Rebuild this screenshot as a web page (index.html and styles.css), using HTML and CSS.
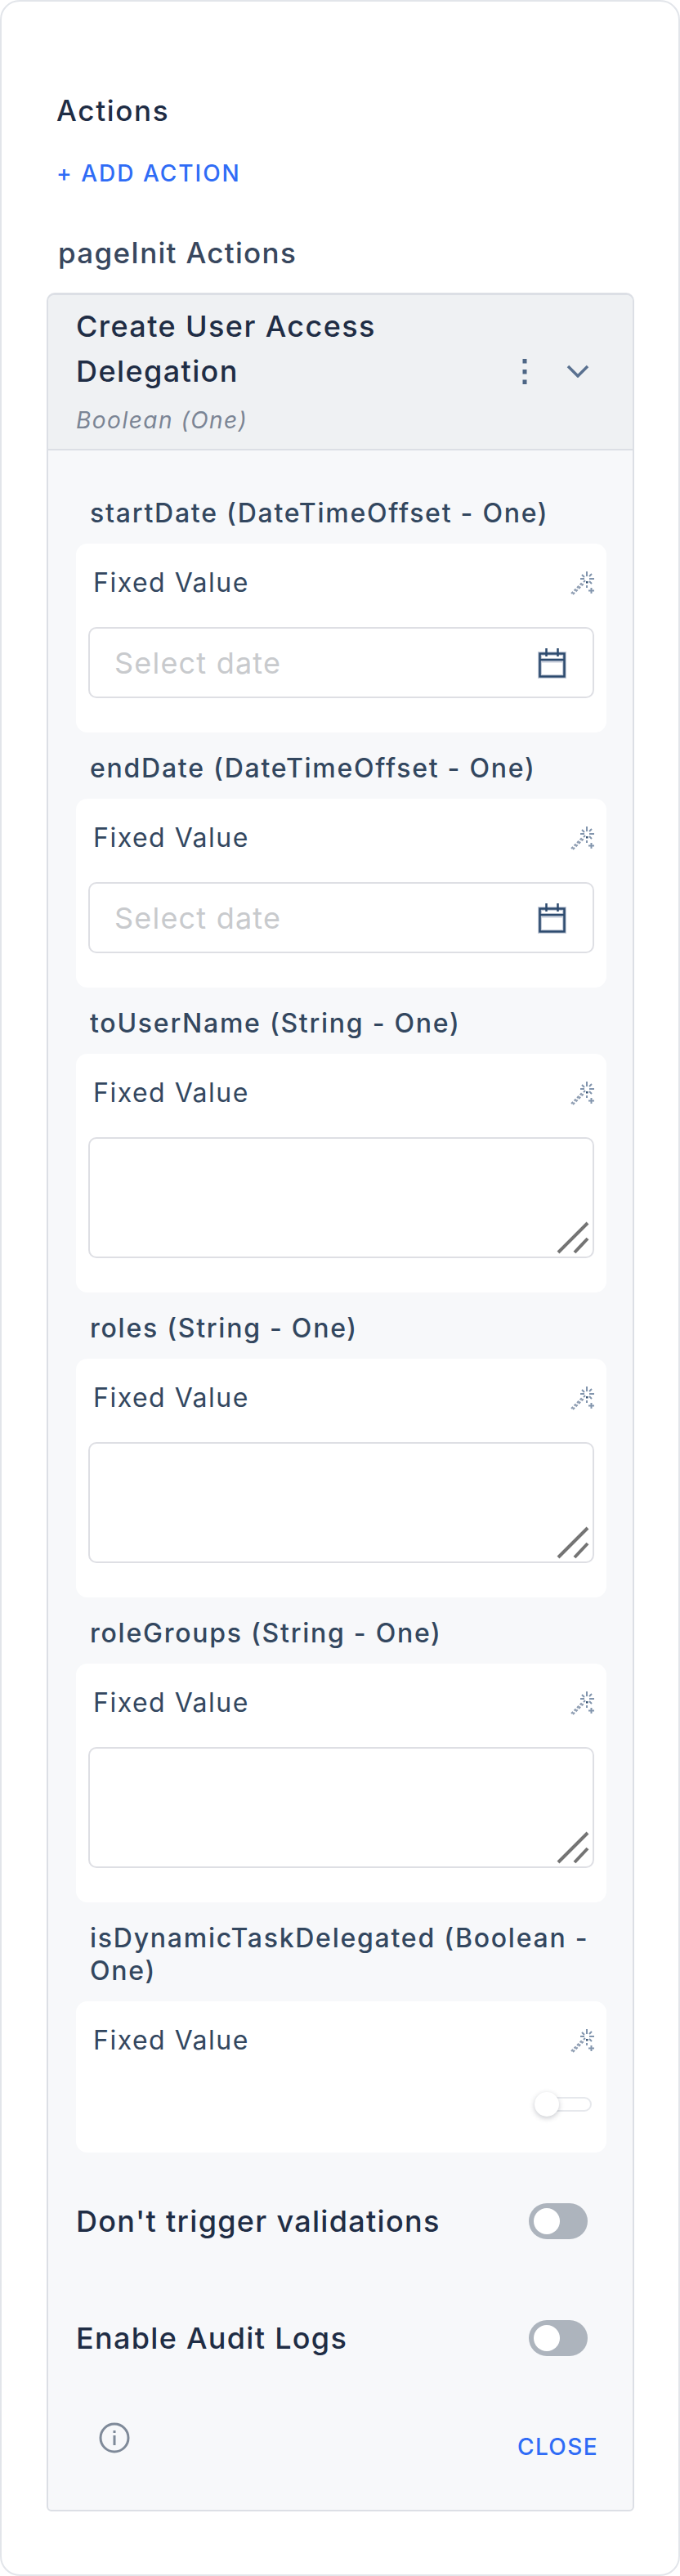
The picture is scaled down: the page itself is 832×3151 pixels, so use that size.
FILE: index.html
```html
<!DOCTYPE html>
<html lang="en">
<head>
<meta charset="utf-8">
<title>Actions</title>
<link rel="stylesheet" href="styles.css">
</head>
<body>
<svg class="defs" width="0" height="0" aria-hidden="true">
  <symbol id="wand" viewBox="0 0 30 30">
    <path d="M1 28 15 14M3 29 17 15" fill="none" stroke="#8c9bb0" stroke-width="2" stroke-dasharray="3 2"/>
    <path d="M20 1v6M20 18v3M12 10h5M23 10h6M14 5l3 3M26 4l-3 3M16 14l2-2M26 16l-3-3" fill="none" stroke="#8295ad" stroke-width="2"/>
    <path d="M19 13h2.500v2.500H19z" fill="#34506f"/>
    <path d="M25.500 21v7M22 24.500h7" fill="none" stroke="#8295ad" stroke-width="2"/>
  </symbol>
  <symbol id="cal" viewBox="0 0 36 38">
    <g fill="none" stroke="#c7cedb" stroke-width="5"><path d="M3.500 7.500h30v28h-30zM3.500 16h30"/></g>
    <g fill="none" stroke="#2c4a6e" stroke-width="2.500"><path d="M3.500 7.500h30v28h-30zM3.500 15h30M11.500 1v10M25.500 1v10"/></g>
  </symbol>
  <symbol id="grip" viewBox="0 0 44 44"><path d="M2 39 38 3M22 39 38 22" fill="none" stroke="#747474" stroke-width="4"/></symbol>
</svg>
<main class="panel">
  <h2 class="title">Actions</h2>
  <a class="add">+ ADD ACTION</a>
  <h3 class="sub">pageInit Actions</h3>
  <section class="card">
    <header class="head">
      <div class="head-text">
        <div class="name">Create User Access Delegation</div>
        <div class="type">Boolean (One)</div>
      </div>
      <div class="tools">
        <svg width="6" height="31" viewBox="0 0 6 31"><path d="M3 0v5.500M3 13v5.500M3 25.500V31" stroke="#4d6685" stroke-width="5"/></svg>
        <svg width="28" height="16" viewBox="0 0 28 16"><path d="M2 2l12 12L26 2" fill="none" stroke="#5a7190" stroke-width="3.500"/></svg>
      </div>
    </header>
    <div class="body">
      <div class="field">
        <label class="lbl">startDate (DateTimeOffset - One)</label>
        <div class="box">
          <div class="fixed"><span>Fixed Value</span><svg class="wand"><use href="#wand"/></svg></div>
          <div class="date"><span>Select date</span><svg class="cal"><use href="#cal"/></svg></div>
        </div>
      </div>
      <div class="field">
        <label class="lbl">endDate (DateTimeOffset - One)</label>
        <div class="box">
          <div class="fixed"><span>Fixed Value</span><svg class="wand"><use href="#wand"/></svg></div>
          <div class="date"><span>Select date</span><svg class="cal"><use href="#cal"/></svg></div>
        </div>
      </div>
      <div class="field">
        <label class="lbl">toUserName (String - One)</label>
        <div class="box">
          <div class="fixed"><span>Fixed Value</span><svg class="wand"><use href="#wand"/></svg></div>
          <div class="area"><svg class="grip"><use href="#grip"/></svg></div>
        </div>
      </div>
      <div class="field">
        <label class="lbl">roles (String - One)</label>
        <div class="box">
          <div class="fixed"><span>Fixed Value</span><svg class="wand"><use href="#wand"/></svg></div>
          <div class="area"><svg class="grip"><use href="#grip"/></svg></div>
        </div>
      </div>
      <div class="field">
        <label class="lbl">roleGroups (String - One)</label>
        <div class="box">
          <div class="fixed"><span>Fixed Value</span><svg class="wand"><use href="#wand"/></svg></div>
          <div class="area"><svg class="grip"><use href="#grip"/></svg></div>
        </div>
      </div>
      <div class="field">
        <label class="lbl">isDynamicTaskDelegated (Boolean - One)</label>
        <div class="box box-bool">
          <div class="fixed"><span>Fixed Value</span><svg class="wand"><use href="#wand"/></svg></div>
          <div class="mini-row"><span class="mini"><i></i></span></div>
        </div>
      </div>
      <div class="opt opt-first"><span>Don't trigger validations</span><span class="tog"><i></i></span></div>
      <div class="opt"><span>Enable Audit Logs</span><span class="tog"><i></i></span></div>
      <footer class="foot">
        <svg width="38" height="38" viewBox="0 0 38 38"><circle cx="19" cy="19" r="17" fill="none" stroke="#7f8a99" stroke-width="3"/><path d="M19 16v12M19 10v3" stroke="#7f8a99" stroke-width="3"/></svg>
        <a class="close">CLOSE</a>
      </footer>
    </div>
  </section>
</main>
</body>
</html>
```
FILE: styles.css
```css
* { box-sizing: border-box; }
html, body { margin: 0; padding: 0; background: #fff; }
body { font-family: Inter, "Liberation Sans", sans-serif; color: #1f2d45; }
.defs { position: absolute; }
.panel { width: 832px; height: 3151px; border: 2px solid #e2e5ea; border-radius: 24px; padding: 109px 55px 0; background: #fff; }
.title { margin: 0 0 0 12px; font-size: 35px; line-height: 48px; font-weight: 500; letter-spacing: 1.7px; color: #1f2d45; }
.add { display: block; margin: 37px 0 0 12px; font-size: 28px; line-height: 32px; font-weight: 500; letter-spacing: 2px; color: #2f6cf6; }
.sub { margin: 57px 0 0 14px; font-size: 35px; line-height: 48px; font-weight: 500; letter-spacing: 1.3px; color: #38475e; }
.card { margin-top: 25px; width: 719px; height: 2714px; border: 2px solid #dcdfe5; border-top-width: 3px; border-radius: 10px 10px 6px 6px; background: #f7f8fa; overflow: hidden; }
.head { height: 190px; background: #eff1f3; border-bottom: 2px solid #dcdfe5; padding: 11px 53px 0 34px; display: flex; justify-content: space-between; }
.head-text { width: 500px; }
.name { font-size: 36px; line-height: 55px; font-weight: 500; letter-spacing: 1.4px; color: #1f2d45; }
.type { margin-top: 14px; font-size: 28px; line-height: 36px; font-style: italic; letter-spacing: 1.5px; color: #7b8595; }
.tools { display: flex; align-items: center; gap: 48px; height: 164px; }
.body { padding: 57px 32px 0 34px; }
.field { margin-bottom: 24px; }
.lbl { display: block; padding: 0 17px; font-size: 32px; line-height: 40px; font-weight: 500; letter-spacing: 1.75px; color: #33475f; }
.box { margin-top: 17px; background: #fff; border-radius: 14px; padding: 29px 15px 42px; }
.box-bool { padding-bottom: 50px; }
.fixed { display: flex; justify-content: space-between; align-items: center; height: 38px; padding-left: 6px; font-size: 32px; line-height: 38px; letter-spacing: 1.5px; color: #33475f; }
.wand { width: 30px; height: 30px; margin-right: -1px; }
.date { margin-top: 35px; height: 87px; border: 2px solid #dedfe4; border-radius: 10px; display: flex; align-items: center; justify-content: space-between; padding: 0 32px 0 30px; font-size: 36px; letter-spacing: 1.2px; color: #c8cacd; }
.cal { width: 36px; height: 38px; }
.area { margin-top: 35px; height: 148px; border: 2px solid #dedfe4; border-radius: 10px; position: relative; }
.grip { position: absolute; right: 0; bottom: 0; width: 44px; height: 44px; }
.mini-row { display: flex; justify-content: flex-end; margin-top: 50px; height: 18px; padding-right: 3px; }
.mini { width: 70px; height: 18px; border: 2px solid #e6e8ec; border-radius: 10px; position: relative; display: block; }
.mini i { position: absolute; left: -2px; top: -8px; width: 30px; height: 30px; border-radius: 50%; background: #fff; box-shadow: 0 2px 6px rgba(30,40,60,.25); }
.opt { display: flex; justify-content: space-between; align-items: center; height: 48px; margin-top: 95px; padding-right: 23px; font-size: 36px; line-height: 48px; font-weight: 500; letter-spacing: 1.3px; color: #1f2d45; }
.opt-first { margin-top: 60px; }
.tog { width: 72px; height: 44px; background: #adb4bd; border-radius: 22px; position: relative; display: block; }
.tog i { position: absolute; left: 6px; top: 6px; width: 32px; height: 32px; border-radius: 50%; background: #fff; }
.foot { display: flex; justify-content: space-between; align-items: flex-start; margin-top: 79px; padding: 0 10px 0 28px; }
.close { margin-top: 12px; font-size: 28px; line-height: 36px; font-weight: 500; letter-spacing: 1.4px; color: #2f6cf6; }
```
